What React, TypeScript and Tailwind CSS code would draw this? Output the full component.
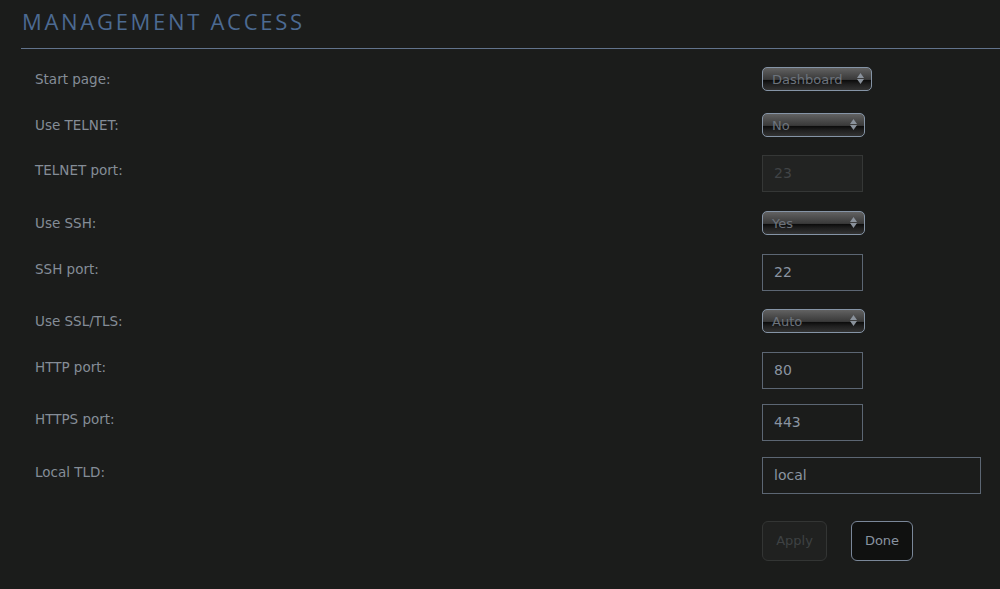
import { ReactNode } from "react";

type Option = { label: string; kind: "select" | "input" | "disabled"; value: string; width?: string; gap: string };

// settings rows, top margin tuned per row
const rows: Option[] = [
  { label: "Start page:", kind: "select", value: "Dashboard", width: "w-[110px]", gap: "mt-[18px]" },
  { label: "Use TELNET:", kind: "select", value: "No", width: "w-[103px]", gap: "mt-[22px]" },
  { label: "TELNET port:", kind: "disabled", value: "23", width: "w-[101px]", gap: "mt-[18px]" },
  { label: "Use SSH:", kind: "select", value: "Yes", width: "w-[103px]", gap: "mt-[19px]" },
  { label: "SSH port:", kind: "input", value: "22", width: "w-[101px]", gap: "mt-[19px]" },
  { label: "Use SSL/TLS:", kind: "select", value: "Auto", width: "w-[103px]", gap: "mt-[18px]" },
  { label: "HTTP port:", kind: "input", value: "80", width: "w-[101px]", gap: "mt-[19px]" },
  { label: "HTTPS port:", kind: "input", value: "443", width: "w-[101px]", gap: "mt-[15px]" },
  { label: "Local TLD:", kind: "input", value: "local", width: "w-[219px]", gap: "mt-[16px]" },
];

function GlossSelect({ value, width }: { value: string; width?: string }) {
  return (
    <div
      className={`relative h-[24px] ${width} rounded-[5px] border border-[#8594a6] overflow-hidden bg-[linear-gradient(to_bottom,#626262_0%,#4a4a4a_30%,#3a3a3a_52%,#0c0c0c_56%,#1e1e1e_72%,#333333_100%)]`}
    >
      <span className="absolute left-[9px] top-[3px] text-[13px] leading-[18px] text-[#6c737c]">{value}</span>
      <span className="absolute right-[7px] top-[5px] flex flex-col items-center gap-[1px]">
        <svg width="7" height="5" viewBox="0 0 7 5">
          <path d="M3.5 0 L7 5 L0 5 Z" fill="#8a929c" />
        </svg>
        <svg width="7" height="5" viewBox="0 0 7 5">
          <path d="M0 0 L7 0 L3.5 5 Z" fill="#8a929c" />
        </svg>
      </span>
    </div>
  );
}

function TextBox({ value, width, disabled }: { value: string; width?: string; disabled?: boolean }) {
  return (
    <div
      className={`h-[37px] ${width} flex items-center pl-[11px] text-[14px] ${
        disabled ? "bg-[#222322] border border-[#353736] text-[#414446]" : "border border-[#5c6673] text-[#8a94a1]"
      }`}
    >
      {value}
    </div>
  );
}

function Row({ label, gap, children, tall }: { label: string; gap: string; children: ReactNode; tall: boolean }) {
  return (
    <div className={`flex items-start ${gap}`}>
      <div className={`w-[727px] text-[13.5px] text-[#858d97] ${tall ? "pt-[3px] leading-[24px]" : "pt-px leading-[23px]"}`}>
        {label}
      </div>
      {children}
    </div>
  );
}

export default function App() {
  return (
    <div className="min-h-[589px] w-[1000px] bg-[#1b1c1b] font-['DejaVu_Sans',sans-serif] overflow-hidden">
      <div className="pl-[21px] pt-[7px]">
        <h1 className="pl-[1px] text-[22px] leading-[28px] tracking-[2.7px] text-[#4c6a92] font-['Open_Sans',sans-serif]">
          MANAGEMENT ACCESS
        </h1>
        <div className="mt-[13px] h-px bg-[#62738c]" />
      </div>

      <div className="pl-[35px]">
        {rows.map((r) => (
          <Row key={r.label} label={r.label} gap={r.gap} tall={r.kind !== "select"}>
            {r.kind === "select" ? (
              <GlossSelect value={r.value} width={r.width} />
            ) : (
              <TextBox value={r.value} width={r.width} disabled={r.kind === "disabled"} />
            )}
          </Row>
        ))}

        <div className="flex mt-[27px] pl-[727px] gap-[24px]">
          <button className="h-[40px] w-[65px] rounded-[6px] border border-[#333534] bg-[#202120] text-[13px] text-[#3e4143]">
            Apply
          </button>
          <button className="h-[40px] w-[62px] rounded-[6px] border border-[#7a8799] bg-[#101110] text-[13px] text-[#8993a0]">
            Done
          </button>
        </div>
      </div>
    </div>
  );
}
